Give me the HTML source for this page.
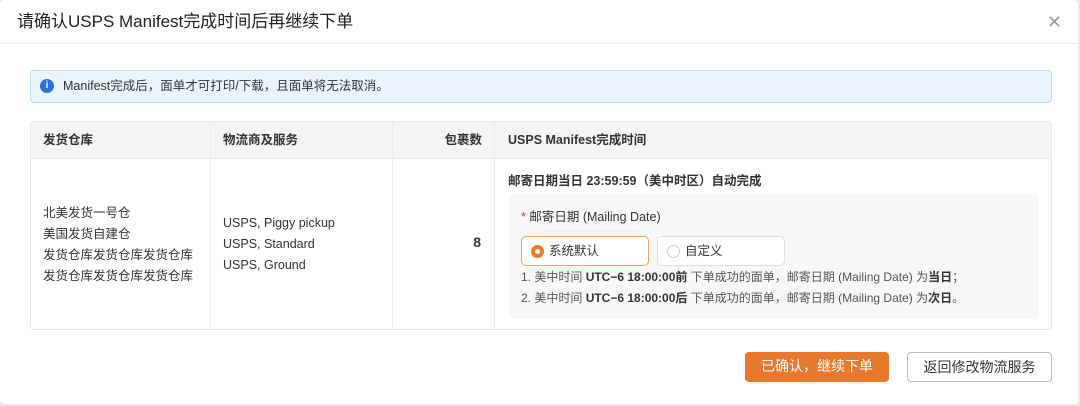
<!DOCTYPE html>
<html><head><meta charset="utf-8"><style>
*{box-sizing:border-box;margin:0;padding:0}
body{width:1080px;height:406px;background:#e9e9e9;font-family:"Liberation Sans","Noto Sans CJK SC",sans-serif;color:#333;position:relative;overflow:hidden}
.dlg{position:absolute;left:0;top:0;width:1078px;height:404px;background:#fff;border-radius:4px}
.hd{position:absolute;left:0;top:0;right:0;height:44px;border-bottom:1px solid #ececec;font-size:17px;line-height:44px;padding-left:17px;color:#222}
.x{position:absolute;right:16px;top:12px;font-size:18px;color:#999}
.alert{position:absolute;left:30px;top:70px;width:1022px;height:33px;background:#eaf4fe;border:1px solid #b9dcf8;border-radius:4px;font-size:12.5px;line-height:31px;padding-left:32px;color:#333}
.alert i{position:absolute;left:9px;top:8px;width:14px;height:14px;border-radius:50%;background:#2a6fdc;color:#fff;font-size:10px;font-style:normal;text-align:center;line-height:14px;font-weight:bold}
.tb{position:absolute;left:30px;top:121px;width:1022px;height:209px;border:1px solid #e6e6e6;border-radius:4px;overflow:hidden}
.th{position:absolute;top:0;left:0;right:0;height:37px;background:#f4f4f4;border-bottom:1px solid #e6e6e6}
.c{position:absolute;top:0;bottom:0;border-right:1px solid #ececec;font-size:12.5px}
.c1{left:0;width:180px}.c2{left:180px;width:182px}.c3{left:362px;width:102px}.c4{left:464px;width:558px;border-right:none}
.h{position:absolute;top:0;line-height:37px;font-weight:bold;color:#333}
.lines{position:absolute;line-height:21px;font-size:12.5px}
.box{position:absolute;left:14px;top:72px;width:530px;height:125px;background:#f7f7f7;border-radius:6px}
.rd{position:absolute;top:42px;height:30px;border:1px solid #ddd;border-radius:5px;background:#fff;font-size:12.5px;line-height:28px;padding-left:27px}
.rd b{position:absolute;left:9px;top:8px;width:13px;height:13px;border-radius:50%;border:1px solid #ccc}
.btn{position:absolute;top:352px;height:30px;border-radius:4px;font-size:14px;text-align:center;line-height:29px}
</style></head><body>
<div class="dlg">
<div class="hd">请确认USPS Manifest完成时间后再继续下单</div>
<div class="x">✕</div>
<div class="alert"><i>i</i>Manifest完成后，面单才可打印/下载，且面单将无法取消。</div>
<div class="tb">
<div class="th"></div>
<div class="c c1"><span class="h" style="left:12px">发货仓库</span>
<div class="lines" style="left:12px;top:81px">北美发货一号仓<br>美国发货自建仓<br>发货仓库发货仓库发货仓库<br>发货仓库发货仓库发货仓库</div></div>
<div class="c c2"><span class="h" style="left:12px">物流商及服务</span>
<div class="lines" style="left:12px;top:91px">USPS, Piggy pickup<br>USPS, Standard<br>USPS, Ground</div></div>
<div class="c c3"><span class="h" style="right:12px">包裹数</span>
<div style="position:absolute;right:13px;top:112px;font-weight:bold;font-size:14px">8</div></div>
<div class="c c4"><span class="h" style="left:13px">USPS Manifest完成时间</span>
<div style="position:absolute;left:13px;top:48px;font-weight:bold;font-size:12.5px">邮寄日期当日 23:59:59（美中时区）自动完成</div>
<div class="box">
<div style="position:absolute;left:12px;top:12px;font-size:12.5px"><span style="color:#e33">*</span> 邮寄日期 (Mailing Date)</div>
<div class="rd" style="left:12px;width:128px;border-color:#f0a060"><b style="border:4px solid #f07a2a;background:#fff"></b>系统默认</div>
<div class="rd" style="left:148px;width:128px"><b></b>自定义</div>
<div style="position:absolute;left:12px;top:73px;font-size:12px;line-height:21px;color:#555">1. 美中时间 <b style="color:#333">UTC−6 18:00:00前</b> 下单成功的面单，邮寄日期 (Mailing Date) 为<b style="color:#333">当日</b>；<br>2. 美中时间 <b style="color:#333">UTC−6 18:00:00后</b> 下单成功的面单，邮寄日期 (Mailing Date) 为<b style="color:#333">次日</b>。</div>
</div></div>
</div>
<div class="btn" style="left:745px;width:144px;background:#e8782c;color:#fff">已确认，继续下单</div>
<div class="btn" style="left:907px;width:145px;border:1px solid #bbb;color:#333;background:#fff">返回修改物流服务</div>
</div>
</body></html>
